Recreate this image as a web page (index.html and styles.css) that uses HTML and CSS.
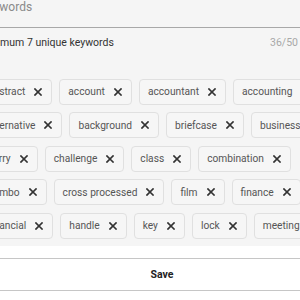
FILE: index.html
```html
<!DOCTYPE html>
<html>
<head>
<meta charset="utf-8">
<link rel="stylesheet" href="styles.css">
</head>
<body>
<div class="page">
  <div class="top">
    <div class="field"><span class="placeholder">Keywords</span></div>
    <div class="helper"><span class="hint">Minimum 7 unique keywords</span><span class="count">36/50</span></div>
    <div class="chips">
      <span class="chip">abstract<svg class="x" viewBox="0 0 8 8"><path d="M1 1L7 7M7 1L1 7"/></svg></span>
      <span class="chip">account<svg class="x" viewBox="0 0 8 8"><path d="M1 1L7 7M7 1L1 7"/></svg></span>
      <span class="chip">accountant<svg class="x" viewBox="0 0 8 8"><path d="M1 1L7 7M7 1L1 7"/></svg></span>
      <span class="chip">accounting<svg class="x" viewBox="0 0 8 8"><path d="M1 1L7 7M7 1L1 7"/></svg></span>
      <span class="chip">alternative<svg class="x" viewBox="0 0 8 8"><path d="M1 1L7 7M7 1L1 7"/></svg></span>
      <span class="chip">background<svg class="x" viewBox="0 0 8 8"><path d="M1 1L7 7M7 1L1 7"/></svg></span>
      <span class="chip">briefcase<svg class="x" viewBox="0 0 8 8"><path d="M1 1L7 7M7 1L1 7"/></svg></span>
      <span class="chip">business<svg class="x" viewBox="0 0 8 8"><path d="M1 1L7 7M7 1L1 7"/></svg></span>
      <span class="chip">carry<svg class="x" viewBox="0 0 8 8"><path d="M1 1L7 7M7 1L1 7"/></svg></span>
      <span class="chip">challenge<svg class="x" viewBox="0 0 8 8"><path d="M1 1L7 7M7 1L1 7"/></svg></span>
      <span class="chip">class<svg class="x" viewBox="0 0 8 8"><path d="M1 1L7 7M7 1L1 7"/></svg></span>
      <span class="chip">combination<svg class="x" viewBox="0 0 8 8"><path d="M1 1L7 7M7 1L1 7"/></svg></span>
      <span class="chip">combo<svg class="x" viewBox="0 0 8 8"><path d="M1 1L7 7M7 1L1 7"/></svg></span>
      <span class="chip">cross processed<svg class="x" viewBox="0 0 8 8"><path d="M1 1L7 7M7 1L1 7"/></svg></span>
      <span class="chip">film<svg class="x" viewBox="0 0 8 8"><path d="M1 1L7 7M7 1L1 7"/></svg></span>
      <span class="chip">finance<svg class="x" viewBox="0 0 8 8"><path d="M1 1L7 7M7 1L1 7"/></svg></span>
      <span class="chip">financial<svg class="x" viewBox="0 0 8 8"><path d="M1 1L7 7M7 1L1 7"/></svg></span>
      <span class="chip">handle<svg class="x" viewBox="0 0 8 8"><path d="M1 1L7 7M7 1L1 7"/></svg></span>
      <span class="chip">key<svg class="x" viewBox="0 0 8 8"><path d="M1 1L7 7M7 1L1 7"/></svg></span>
      <span class="chip">lock<svg class="x" viewBox="0 0 8 8"><path d="M1 1L7 7M7 1L1 7"/></svg></span>
      <span class="chip">meeting<svg class="x" viewBox="0 0 8 8"><path d="M1 1L7 7M7 1L1 7"/></svg></span>
    </div>
  </div>
  <div class="bottom">
    <button class="save">Save</button>
  </div>
</div>
</body>
</html>
```
FILE: styles.css
```css
html, body {
  margin: 0;
  padding: 0;
  background: #ffffff;
  overflow: hidden;
  width: 300px;
  height: 300px;
}
body {
  font-family: Roboto, "Liberation Sans", sans-serif;
  font-size: 10.5px;
}
.page {
  margin-left: -36px;
  width: 396px;
}
.top {
  background: #f5f5f5;
  padding: 0 12px 7px 12px;
}
.field {
  height: 27px;
  border-bottom: 1px solid #a8a8a8;
  padding-left: 4px;
}
.placeholder {
  display: block;
  font-size: 12px;
  line-height: 14px;
  color: #8a8a8a;
}
.helper {
  display: flex;
  justify-content: space-between;
  padding: 0 0 0 4px;
  margin: 8px 50px 0 0;
  line-height: 14px;
}
.hint {
  color: #333333;
}
.count {
  color: #a8a8a8;
}
.chips {
  display: flex;
  flex-wrap: wrap;
  gap: 7.5px 7px;
  margin-top: 28.5px;
  padding-left: 3px;
}
.chip {
  display: inline-flex;
  align-items: center;
  gap: 9px;
  height: 24px;
  padding: 0 9px 0 8px;
  border: 1px solid #e0e0e0;
  border-radius: 4px;
  background: #f6f6f6;
  color: #555555;
  font-size: 10.2px;
  white-space: nowrap;
}
.x {
  width: 8px;
  height: 8px;
  fill: none;
  stroke: #333333;
  stroke-width: 1.7;
  stroke-linecap: square;
}
.bottom {
  background: #ffffff;
  padding-top: 12px;
}
.save {
  display: block;
  width: 100%;
  height: 33px;
  border: none;
  border-top: 1px solid #c6c6c6;
  border-bottom: 1px solid #c6c6c6;
  background: #ffffff;
  font-family: Roboto, "Liberation Sans", sans-serif;
  font-size: 10.5px;
  font-weight: 700;
  color: #222222;
  padding: 0;
}
```
